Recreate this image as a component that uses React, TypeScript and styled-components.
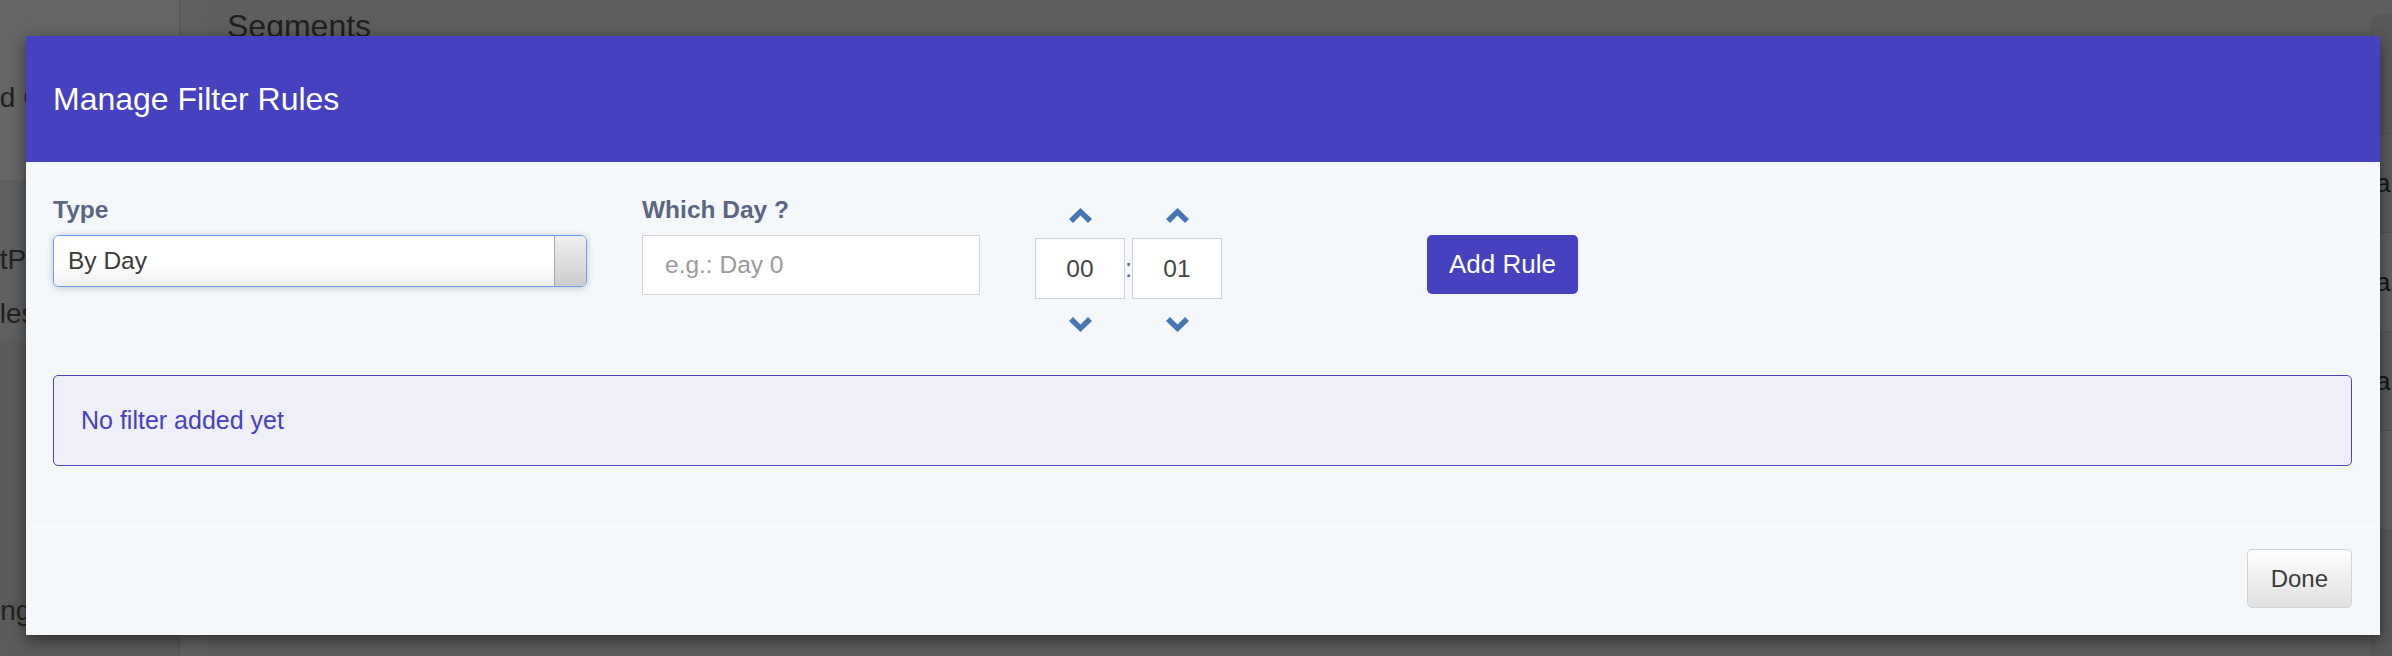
import React from 'react';
import styled, { createGlobalStyle } from 'styled-components';

// GLOBAL
const GlobalStyle = createGlobalStyle`
  html, body {
    margin: 0;
    padding: 0;
  }
  body {
    width: 2392px;
    height: 656px;
    overflow: hidden;
    font-family: "Liberation Sans", Arial, Helvetica, sans-serif;
    background: #ebebeb;
  }
  * {
    box-sizing: border-box;
  }
`;

// BACKGROUND PAGE
const Page = styled.div`
  position: relative;
  display: flex;
  width: 2392px;
  height: 656px;
  overflow: hidden;
`;

const Sidebar = styled.aside`
  display: flex;
  flex-direction: column;
  width: 180px;
  flex-shrink: 0;
  overflow: hidden;
  border-right: 1px solid #d2d2d2;
`;

const SideSection = styled.div<{ $bg: string; $height?: number; $top: number }>`
  display: flex;
  flex-direction: column;
  gap: 22px;
  height: ${p => (p.$height ? `${p.$height}px` : 'auto')};
  flex: ${p => (p.$height ? '0 0 auto' : '1')};
  padding-top: ${p => p.$top}px;
  background: ${p => p.$bg};
`;

const NavText = styled.span<{ $shift: number }>`
  margin-left: -${p => p.$shift}px;
  font-size: 28px;
  color: #555;
  white-space: nowrap;
`;

const Gutter = styled.div`
  width: 27px;
  flex-shrink: 0;
  background: #f0f0f0;
`;

const Main = styled.main`
  display: flex;
  flex: 1;
  background: #ebebeb;
`;

const MainTitle = styled.h1`
  flex: 1;
  margin: 8px 0 0 20px;
  font-size: 32px;
  font-weight: normal;
  color: #505050;
`;

const SideCard = styled.div`
  display: flex;
  flex-direction: column;
  width: 22px;
  margin-top: 14px;
  border-top-left-radius: 10px;
  background: #dcdcdc;
  overflow: hidden;
`;

const CardHead = styled.div`
  height: 119px;
  flex-shrink: 0;
`;

const CardRow = styled.div<{ $alt?: boolean }>`
  display: flex;
  align-items: center;
  height: 99px;
  flex-shrink: 0;
  padding-left: 6px;
  border-top: 1px solid #cfcfcf;
  background: ${p => (p.$alt ? '#e4e4e4' : '#f0f0f0')};
  font-size: 26px;
  color: #333;
  white-space: nowrap;
`;

const Backdrop = styled.div`
  position: absolute;
  inset: 0;
  background: rgba(0, 0, 0, 0.6);
`;

// MODAL
const Modal = styled.div`
  position: absolute;
  top: 36px;
  left: 26px;
  right: 12px;
  display: flex;
  flex-direction: column;
  background: #f5f8fb;
  box-shadow: 0 5px 15px rgba(0, 0, 0, 0.5);
`;

const Header = styled.header`
  display: flex;
  align-items: center;
  height: 126px;
  padding: 0 27px;
  background: #4641be;
`;

const Title = styled.h2`
  margin: 0;
  font-size: 32px;
  font-weight: normal;
  color: #ffffff;
`;

const Body = styled.div`
  display: flex;
  flex-direction: column;
  padding: 34px 28px 55px 27px;
`;

const FormRow = styled.div`
  display: flex;
  align-items: flex-start;
  gap: 55px;
`;

const Field = styled.div<{ $width: number }>`
  display: flex;
  flex-direction: column;
  width: ${p => p.$width}px;
`;

const Label = styled.label`
  margin-bottom: 10px;
  font-size: 24.5px;
  line-height: 28.8px;
  font-weight: bold;
  color: #5a6682;
`;

const SelectBox = styled.div`
  display: flex;
  height: 52px;
  border: 1px solid #6d9df0;
  border-radius: 6px;
  overflow: hidden;
  box-shadow: 0 1px 7px rgba(0, 0, 0, 0.22);
`;

const SelectValue = styled.span`
  display: flex;
  align-items: center;
  flex: 1;
  padding-left: 14px;
  background: linear-gradient(#ffffff 55%, #eeeeee);
  font-size: 24.5px;
  color: #3b3b3b;
`;

const SelectArrow = styled.span`
  width: 32px;
  border-left: 1px solid #a9a9a9;
  background: linear-gradient(#efefef, #cdcdcd);
`;

const TextInput = styled.input`
  height: 60px;
  padding: 0 22px;
  border: 1px solid #d2d6dc;
  background: #ffffff;
  font-family: inherit;
  font-size: 24.5px;
  color: #444;
  outline: none;

  &::placeholder {
    color: #9b9b9b;
  }
`;

const TimePicker = styled.div`
  display: flex;
  align-items: flex-start;
`;

const TimeColumn = styled.div`
  display: flex;
  flex-direction: column;
  align-items: center;
  width: 90px;
`;

const Stepper = styled.button<{ $height: number }>`
  display: flex;
  align-items: center;
  justify-content: center;
  width: 100%;
  height: ${p => p.$height}px;
  padding: 0;
  border: none;
  background: transparent;
  color: #4577b4;
  cursor: pointer;
`;

const TimeBox = styled.input`
  width: 90px;
  height: 61px;
  margin: 4px 0;
  border: 1px solid #ccd1d9;
  background: #ffffff;
  text-align: center;
  font-family: inherit;
  font-size: 24.5px;
  color: #454545;
  outline: none;
`;

const Colon = styled.span`
  display: flex;
  align-items: center;
  justify-content: center;
  width: 7px;
  height: 61px;
  margin-top: 42px;
  font-size: 26px;
  color: #5a6682;
`;

const AddButton = styled.button`
  height: 59px;
  margin: 39px 0 0 205px;
  padding: 0 22px;
  border: none;
  border-radius: 5px;
  background: #4641be;
  font-family: inherit;
  font-size: 26px;
  color: #ffffff;
  cursor: pointer;
`;

const EmptyNotice = styled.div`
  display: flex;
  align-items: center;
  height: 91px;
  margin-top: 30px;
  padding-left: 27px;
  border: 1px solid #4a46c2;
  border-radius: 5px;
  background: #efeff9;
  font-size: 25px;
  color: #4641be;
`;

const Footer = styled.footer`
  display: flex;
  justify-content: flex-end;
  padding: 27px 28px 27px 27px;
  border-top: 1px solid #eef1f5;
`;

const DoneButton = styled.button`
  height: 59px;
  padding: 0 23px;
  border: 1px solid #d3d3d3;
  border-radius: 5px;
  background: linear-gradient(#ffffff, #e0e0e0);
  font-family: inherit;
  font-size: 24px;
  color: #3a3a3a;
  cursor: pointer;
`;

// ICONS
const ChevronUp: React.FC = () => (
  <svg width="23" height="15" viewBox="0 0 23 15" fill="currentColor">
    <polygon points="11.5,0 23,11 19,15 11.5,7.5 4,15 0,11" />
  </svg>
);

const ChevronDown: React.FC = () => (
  <svg width="23" height="15" viewBox="0 0 23 15" fill="currentColor">
    <polygon points="0,4 4,0 11.5,7.5 19,0 23,4 11.5,15" />
  </svg>
);

// COMPONENTS
const TimeUnit: React.FC<{ value: string }> = ({ value }) => (
  <TimeColumn>
    <Stepper $height={38}>
      <ChevronUp />
    </Stepper>
    <TimeBox defaultValue={value} />
    <Stepper $height={42}>
      <ChevronDown />
    </Stepper>
  </TimeColumn>
);

const App: React.FC = () => (
  <>
    <GlobalStyle />
    <Page>
      <Sidebar>
        <SideSection $bg="#ffffff" $height={180} $top={82}>
          <NavText $shift={64}>Saved Campaigns</NavText>
        </SideSection>
        <SideSection $bg="#eef0f6" $height={160} $top={64}>
          <NavText $shift={36}>ListPages</NavText>
          <NavText $shift={36}>Rules</NavText>
        </SideSection>
        <SideSection $bg="#e4e4e4" $top={255}>
          <NavText $shift={90}>Reporting</NavText>
        </SideSection>
      </Sidebar>
      <Gutter />
      <Main>
        <MainTitle>Segments</MainTitle>
        <SideCard>
          <CardHead />
          <CardRow $alt>ar</CardRow>
          <CardRow>ar</CardRow>
          <CardRow $alt>ar</CardRow>
          <CardRow />
        </SideCard>
      </Main>

      <Backdrop />

      <Modal>
        <Header>
          <Title>Manage Filter Rules</Title>
        </Header>
        <Body>
          <FormRow>
            <Field $width={534}>
              <Label>Type</Label>
              <SelectBox>
                <SelectValue>By Day</SelectValue>
                <SelectArrow />
              </SelectBox>
            </Field>
            <Field $width={338}>
              <Label>Which Day ?</Label>
              <TextInput placeholder="e.g.: Day 0" />
            </Field>
            <TimePicker>
              <TimeUnit value="00" />
              <Colon>:</Colon>
              <TimeUnit value="01" />
              <AddButton>Add Rule</AddButton>
            </TimePicker>
          </FormRow>
          <EmptyNotice>No filter added yet</EmptyNotice>
        </Body>
        <Footer>
          <DoneButton>Done</DoneButton>
        </Footer>
      </Modal>
    </Page>
  </>
);

export default App;
